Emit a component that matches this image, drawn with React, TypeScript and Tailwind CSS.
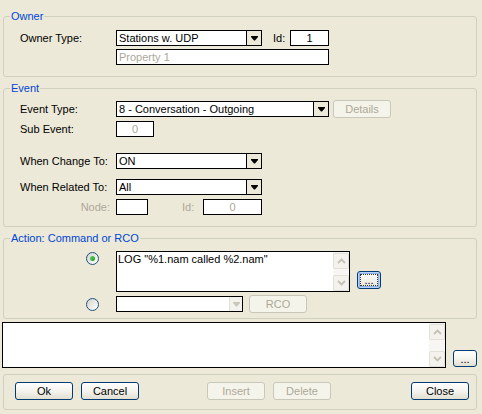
import React from "react";

function Arrow({ disabled }: { disabled?: boolean }) {
  return (
    <svg width="7" height="5" viewBox="0 0 7 5">
      <polygon points="0,0 7,0 7,1 4,4.5 3,4.5 0,1" fill={disabled ? "#c9c7ba" : "#000"} />
    </svg>
  );
}

function Select({ w, text }: { w: string; text: string }) {
  return (
    <div className={`flex h-[16px] border border-black bg-white ${w}`}>
      <div className="flex-1 overflow-hidden whitespace-nowrap pl-[2px] leading-[14px]">{text}</div>
      <div className="flex w-[15px] items-center justify-center border-l border-black bg-[#ece9d8]">
        <Arrow />
      </div>
    </div>
  );
}

function Box({ w, children, grey, center }: { w: string; children?: React.ReactNode; grey?: boolean; center?: boolean }) {
  return (
    <div
      className={`h-[16px] border border-black bg-white px-[2px] leading-[14px] whitespace-nowrap overflow-hidden ${w} ${grey ? "text-[#aca899]" : "text-black"} ${center ? "text-center" : ""}`}
    >
      {children}
    </div>
  );
}

function Btn({ w, children, disabled, cls }: { w: string; children: React.ReactNode; disabled?: boolean; cls?: string }) {
  return (
    <div
      className={`flex h-[18px] items-center justify-center rounded-[3px] border leading-[14px] ${w} ${cls ?? ""} ${
        disabled
          ? "border-[#c9c7ba] bg-[#f5f4ea] text-[#aca899]"
          : "border-[#003c74] bg-linear-to-b from-[#ffffff] via-[#f4f3ee] to-[#e2dfd2] text-black"
      }`}
    >
      {children}
    </div>
  );
}

function Radio({ checked }: { checked?: boolean }) {
  return (
    <div className="flex h-[13px] w-[13px] items-center justify-center rounded-full border border-[#1c5180] bg-linear-to-br from-[#d5d4cc] to-white">
      {checked && <div className="h-[5px] w-[5px] rounded-full bg-linear-to-br from-[#5fd35f] to-[#1a9a1a]" />}
    </div>
  );
}

function ScrollArrow({ up }: { up?: boolean }) {
  return (
    <div className="flex h-[16px] w-[16px] items-center justify-center rounded-[2px] border border-[#e3e1d6] bg-[#f3f2ec]">
      <svg width="9" height="6" viewBox="0 0 9 6">
        <polyline
          points={up ? "1,5 4.5,1.5 8,5" : "1,1 4.5,4.5 8,1"}
          fill="none"
          stroke="#c5c2b4"
          strokeWidth="1.8"
        />
      </svg>
    </div>
  );
}

function ScrollBar() {
  return (
    <div className="flex w-[16px] flex-col justify-between bg-[#f7f6f2] pt-[1px]">
      <ScrollArrow up />
      <ScrollArrow />
    </div>
  );
}

function Legend({ children }: { children: React.ReactNode }) {
  return <legend className="ml-[6px] px-[1px] leading-[13px] text-[#0046d5]">{children}</legend>;
}

export default function App() {
  return (
    <div className="flex h-[414px] w-[482px] flex-col overflow-hidden bg-[#ece9d8] pt-[10px] font-['Liberation_Sans',Arial,sans-serif] text-[11px] text-black">
      {/* Owner */}
      <fieldset className="ml-[3px] w-[474px] rounded-[3px] border border-[#d0d0bf] pb-[11px]">
        <Legend>Owner</Legend>
        <div className="flex flex-col gap-[3px] pl-[16px] pt-[7px]">
          <div className="flex h-[16px] items-center">
            <div className="w-[96px]">Owner Type:</div>
            <Select w="w-[146px]" text="Stations w. UDP" />
            <div className="ml-[11px] w-[17px]">Id:</div>
            <Box w="w-[39px]" center>
              1
            </Box>
          </div>
          <div className="flex h-[16px] items-center pl-[96px]">
            <Box w="w-[213px]" grey>
              Property 1
            </Box>
          </div>
        </div>
      </fieldset>

      {/* Event */}
      <fieldset className="mt-[5px] ml-[3px] w-[474px] rounded-[3px] border border-[#d0d0bf] pb-[11px]">
        <Legend>Event</Legend>
        <div className="flex flex-col pl-[16px] pt-[5px]">
          <div className="flex h-[18px] items-center">
            <div className="w-[96px]">Event Type:</div>
            <Select w="w-[213px]" text="8 - Conversation - Outgoing" />
            <Btn w="w-[58px]" cls="ml-[4px]" disabled>
              Details
            </Btn>
          </div>
          <div className="mt-[3px] flex h-[16px] items-center">
            <div className="w-[96px]">Sub Event:</div>
            <Box w="w-[38px]" grey center>
              0
            </Box>
          </div>
          <div className="mt-[16px] flex h-[16px] items-center">
            <div className="w-[96px]">When Change To:</div>
            <Select w="w-[146px]" text="ON" />
          </div>
          <div className="mt-[10px] flex h-[16px] items-center">
            <div className="w-[96px]">When Related To:</div>
            <Select w="w-[146px]" text="All" />
          </div>
          <div className="mt-[4px] flex h-[16px] items-center">
            <div className="w-[96px] pr-[6px] text-right text-[#aca899]">Node:</div>
            <Box w="w-[32px]" />
            <div className="ml-[34px] w-[21px] text-[#aca899]">Id:</div>
            <Box w="w-[59px]" grey center>
              0
            </Box>
          </div>
        </div>
      </fieldset>

      {/* Action */}
      <fieldset className="mt-[5px] ml-[3px] w-[474px] rounded-[3px] border border-[#d0d0bf] pb-[5px]">
        <Legend>Action: Command or RCO</Legend>
        <div className="flex flex-col pl-[82px] pt-[6px]">
          <div className="flex items-start">
            <div className="mt-[1px]">
              <Radio checked />
            </div>
            <div className="ml-[17px] flex h-[41px] w-[234px] border border-black bg-white">
              <div className="flex-1 pl-[1px] pt-[1px] leading-[13px] whitespace-nowrap">LOG "%1.nam called %2.nam"</div>
              <ScrollBar />
            </div>
            <div className="mt-[20px] ml-[7px] flex h-[18px] w-[24px] items-center justify-center rounded-[3px] border border-[#003c74] bg-linear-to-b from-[#ffffff] to-[#e6e3d6] shadow-[inset_0_0_0_1px_#bcd2f5,inset_0_0_0_2px_#8db2e8]">
              <div className="flex h-[12px] w-[18px] items-center justify-center border border-dotted border-[#333] leading-[8px]">
                ...
              </div>
            </div>
          </div>
          <div className="mt-[3px] flex h-[18px] items-center">
            <Radio />
            <div className="ml-[17px] flex h-[16px] w-[127px] border border-black bg-white">
              <div className="flex-1" />
              <div className="flex w-[13px] items-center justify-center border-l border-[#e3e1d6] bg-[#f3f2ec]">
                <Arrow disabled />
              </div>
            </div>
            <Btn w="w-[58px]" cls="ml-[6px]" disabled>
              RCO
            </Btn>
          </div>
        </div>
      </fieldset>

      {/* Bottom text area */}
      <div className="mt-[3px] ml-[2px] flex items-end">
        <div className="flex h-[46px] w-[444px] border border-black bg-white">
          <div className="flex-1" />
          <ScrollBar />
        </div>
        <div className="mb-[1px] ml-[7px] flex h-[17px] w-[24px] items-center justify-center rounded-[3px] border border-[#003c74] bg-linear-to-b from-[#ffffff] via-[#f4f3ee] to-[#e2dfd2] leading-[8px]">
          ...
        </div>
      </div>

      {/* Buttons */}
      <fieldset className="mt-[6px] ml-[3px] w-[474px] rounded-[3px] border border-[#d0d0bf] pt-[7px] pb-[9px] pl-[11px]">
        <div className="flex">
          <Btn w="w-[58px]">Ok</Btn>
          <Btn w="w-[58px]" cls="ml-[8px]">
            Cancel
          </Btn>
          <Btn w="w-[58px]" cls="ml-[68px]" disabled>
            Insert
          </Btn>
          <Btn w="w-[58px]" cls="ml-[8px]" disabled>
            Delete
          </Btn>
          <Btn w="w-[58px]" cls="ml-[80px]">
            Close
          </Btn>
        </div>
      </fieldset>
    </div>
  );
}
